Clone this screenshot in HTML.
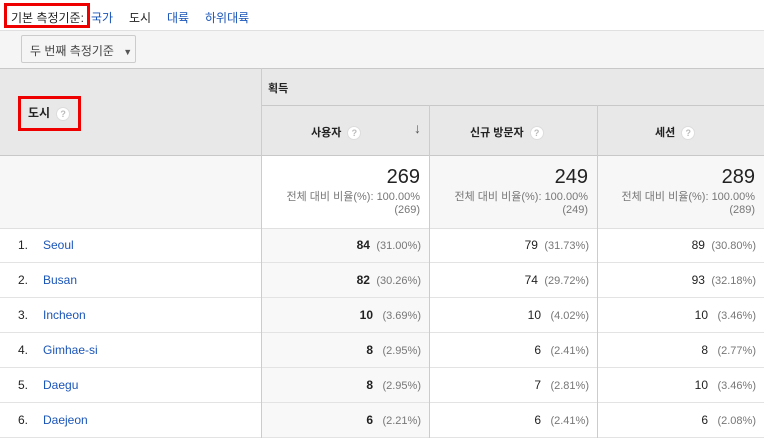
<!DOCTYPE html>
<html><head><meta charset="utf-8"><style>
*{margin:0;padding:0;box-sizing:border-box}
body{width:764px;height:438px;overflow:hidden;background:#fff;font-family:"Liberation Sans","Noto Sans CJK KR",sans-serif;font-size:12px;color:#222;position:relative}
.a{position:absolute}
.q{display:inline-block;width:14px;height:14px;border-radius:50%;background:#fff;border:1px solid #ddd;color:#bbb;font-size:9px;text-align:center;line-height:12px;vertical-align:middle;margin-left:6px}
.link{color:#1a55b8}
.row{position:absolute;left:0;width:764px;height:35px;border-bottom:1px solid #e3e3e3}
.row div{position:absolute;top:0;height:35px;line-height:34px}
.g{color:#777;font-size:11px}
.v{position:absolute;width:1px}
.h{position:absolute;height:1px}
</style></head><body>
<div class="a" style="left:0;top:0;width:764px;height:31px;border-bottom:1px solid #e0e0e0;background:#fff"></div>
<div class="a" style="left:4px;top:3px;width:86px;height:25px;border:3px solid #e00"></div>
<div class="a" style="left:11px;top:9px;font-size:12px">기본 측정기준:</div>
<div class="a link" style="left:91px;top:9px">국가</div>
<div class="a" style="left:129px;top:9px">도시</div>
<div class="a link" style="left:167px;top:9px">대륙</div>
<div class="a link" style="left:205px;top:9px">하위대륙</div>
<div class="a" style="left:0;top:31px;width:764px;height:37px;background:#f5f5f5"></div>
<div class="a" style="left:21px;top:35px;width:115px;height:28px;border:1px solid #ccc;border-radius:2px;background:#f5f5f5;padding:6px 0 0 8px;color:#444">두 번째 측정기준 <span style="font-size:9px;color:#555;margin-left:6px">▼</span></div>
<!-- backgrounds -->
<div class="a" style="left:0;top:68px;width:764px;height:88px;background:#e8e8e8"></div>
<div class="a" style="left:0;top:156px;width:261px;height:72px;background:#f7f7f7"></div>
<div class="a" style="left:430px;top:156px;width:334px;height:72px;background:#f7f7f7"></div>
<div class="a" style="left:262px;top:228px;width:167px;height:210px;background:#f8f8f8"></div>

<div class="a" style="left:268px;top:80px;font-weight:bold;font-size:11px">획득</div>
<div class="a" style="left:18px;top:96px;width:63px;height:35px;border:3px solid #e00"></div>
<div class="a" style="left:28px;top:104px;font-weight:bold">도시<span class="q">?</span></div>
<div class="a" style="left:311px;top:124px;font-weight:bold;font-size:11px">사용자<span class="q">?</span></div>
<div class="a" style="left:414px;top:120px;color:#555;font-size:14px;font-weight:bold">↓</div>
<div class="a" style="left:470px;top:124px;font-weight:bold;font-size:11px">신규 방문자<span class="q">?</span></div>
<div class="a" style="left:655px;top:124px;font-weight:bold;font-size:11px">세션<span class="q">?</span></div>

<div class="a" style="left:261px;top:166px;width:159px;text-align:right;font-size:20px;color:#222">269</div>
<div class="a g" style="left:261px;top:191px;width:159px;text-align:right;line-height:13px">전체 대비 비율(%): 100.00%<br>(269)</div>
<div class="a" style="left:429px;top:166px;width:159px;text-align:right;font-size:20px">249</div>
<div class="a g" style="left:429px;top:191px;width:159px;text-align:right;line-height:13px">전체 대비 비율(%): 100.00%<br>(249)</div>
<div class="a" style="left:597px;top:166px;width:158px;text-align:right;font-size:20px">289</div>
<div class="a g" style="left:597px;top:191px;width:158px;text-align:right;line-height:13px">전체 대비 비율(%): 100.00%<br>(289)</div>

<div class="row" style="top:228px"><div style="left:18px">1.</div><div class="link" style="left:43px">Seoul</div><div style="left:261px;width:160px;text-align:right"><b>84</b> <span class="g">&nbsp;(31.00%)</span></div><div style="left:429px;width:160px;text-align:right">79 <span class="g">&nbsp;(31.73%)</span></div><div style="left:597px;width:159px;text-align:right">89 <span class="g">&nbsp;(30.80%)</span></div></div>
<div class="row" style="top:263px"><div style="left:18px">2.</div><div class="link" style="left:43px">Busan</div><div style="left:261px;width:160px;text-align:right"><b>82</b> <span class="g">&nbsp;(30.26%)</span></div><div style="left:429px;width:160px;text-align:right">74 <span class="g">&nbsp;(29.72%)</span></div><div style="left:597px;width:159px;text-align:right">93 <span class="g">&nbsp;(32.18%)</span></div></div>
<div class="row" style="top:298px"><div style="left:18px">3.</div><div class="link" style="left:43px">Incheon</div><div style="left:261px;width:160px;text-align:right"><b>10</b> <span class="g">&nbsp;&nbsp;(3.69%)</span></div><div style="left:429px;width:160px;text-align:right">10 <span class="g">&nbsp;&nbsp;(4.02%)</span></div><div style="left:597px;width:159px;text-align:right">10 <span class="g">&nbsp;&nbsp;(3.46%)</span></div></div>
<div class="row" style="top:333px"><div style="left:18px">4.</div><div class="link" style="left:43px">Gimhae-si</div><div style="left:261px;width:160px;text-align:right"><b>8</b> <span class="g">&nbsp;&nbsp;(2.95%)</span></div><div style="left:429px;width:160px;text-align:right">6 <span class="g">&nbsp;&nbsp;(2.41%)</span></div><div style="left:597px;width:159px;text-align:right">8 <span class="g">&nbsp;&nbsp;(2.77%)</span></div></div>
<div class="row" style="top:368px"><div style="left:18px">5.</div><div class="link" style="left:43px">Daegu</div><div style="left:261px;width:160px;text-align:right"><b>8</b> <span class="g">&nbsp;&nbsp;(2.95%)</span></div><div style="left:429px;width:160px;text-align:right">7 <span class="g">&nbsp;&nbsp;(2.81%)</span></div><div style="left:597px;width:159px;text-align:right">10 <span class="g">&nbsp;&nbsp;(3.46%)</span></div></div>
<div class="row" style="top:403px"><div style="left:18px">6.</div><div class="link" style="left:43px">Daejeon</div><div style="left:261px;width:160px;text-align:right"><b>6</b> <span class="g">&nbsp;&nbsp;(2.21%)</span></div><div style="left:429px;width:160px;text-align:right">6 <span class="g">&nbsp;&nbsp;(2.41%)</span></div><div style="left:597px;width:159px;text-align:right">6 <span class="g">&nbsp;&nbsp;(2.08%)</span></div></div>

<!-- lines -->
<div class="h" style="left:0;top:68px;width:764px;background:#c8c8c8"></div>
<div class="h" style="left:262px;top:105px;width:502px;background:#c8c8c8"></div>
<div class="h" style="left:0;top:155px;width:764px;background:#c8c8c8"></div>
<div class="h" style="left:0;top:228px;width:764px;background:#e0e0e0"></div>
<div class="v" style="left:261px;top:68px;height:370px;background:#ccc"></div>
<div class="v" style="left:429px;top:105px;height:333px;background:#ccc"></div>
<div class="v" style="left:597px;top:105px;height:333px;background:#ccc"></div>
</body></html>
